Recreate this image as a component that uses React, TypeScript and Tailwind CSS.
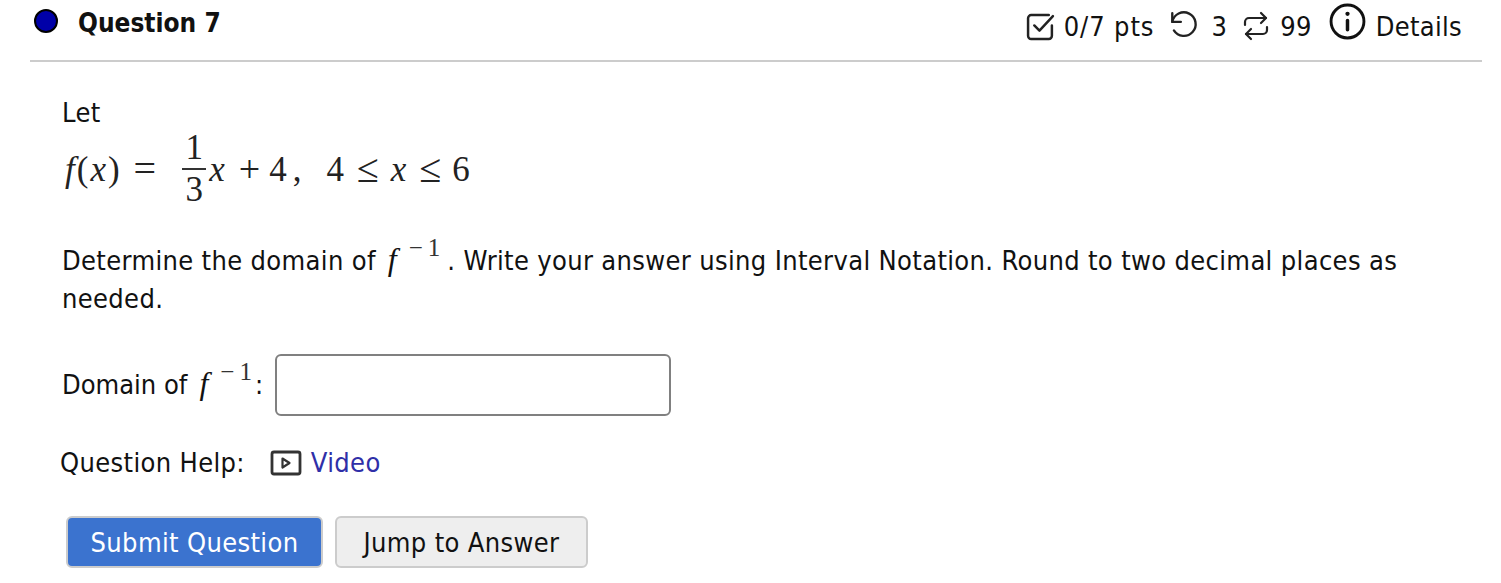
const mathFont = "font-['Liberation_Serif',serif]";

function Finverse({ className = "" }: { className?: string }) {
  return (
    <span className={`${mathFont} inline-flex items-baseline ml-[12px] tracking-normal ${className}`}>
      <i className="text-[32px] leading-none">f</i>
      <span className="relative -top-[14px] ml-[12px] text-[25px] leading-none text-[#333]">−&thinsp;1</span>
    </span>
  );
}

function HeaderIcons() {
  return (
    <div className="flex items-center text-[27px] leading-none text-[#111] tracking-[0.3px]">
      <svg width="29" height="29" viewBox="0 0 28 28" fill="none" stroke="#222" strokeWidth="2.4" strokeLinecap="round" strokeLinejoin="round">
        <path d="M25 13v10a3 3 0 0 1-3 3H5a3 3 0 0 1-3-3V6a3 3 0 0 1 3-3h17" />
        <path d="M8 13l5 5 13-14" />
      </svg>
      <span className="ml-[9px] tracking-[0.9px]">0/7 pts</span>
      <svg className="ml-[14px] -mt-[4px]" width="30" height="30" viewBox="0 0 28 28" fill="none" stroke="#222" strokeWidth="2.2" strokeLinecap="round" strokeLinejoin="round">
        <path d="M4 4v8h8" />
        <path d="M4 12a11 11 0 1 1 1.5 8" />
      </svg>
      <span className="ml-[13px]">3</span>
      <svg className="ml-[15px]" width="28" height="30" viewBox="0 0 28 30" fill="none" stroke="#222" strokeWidth="2.2" strokeLinecap="round" strokeLinejoin="round">
        <path d="M19 2l5 5-5 5" />
        <path d="M3 14v-3a4 4 0 0 1 4-4h17" />
        <path d="M9 28l-5-5 5-5" />
        <path d="M25 16v3a4 4 0 0 1-4 4H4" />
      </svg>
      <span className="ml-[10px]">99</span>
      <svg className="ml-[17px] -mt-[9px]" width="37" height="37" viewBox="0 0 36 36" fill="none" stroke="#111" strokeWidth="2.8" strokeLinecap="round">
        <circle cx="18" cy="18" r="16" />
        <path d="M18 17v9" strokeWidth="3.4" />
        <circle cx="18" cy="10.5" r="2.1" fill="#111" stroke="none" />
      </svg>
      <span className="ml-[10px]">Details</span>
    </div>
  );
}

export default function App() {
  return (
    <div className="w-[1501px] h-[583px] overflow-hidden bg-white pl-[30px] pr-[19px] text-[27px] leading-[38px] tracking-[0.35px] text-[#111] font-['DejaVu_Sans_Condensed','Noto_Sans',sans-serif]">
      <header className="flex items-start justify-between h-[62px] border-b-2 border-[#ccc] pr-[20px]">
        <div className="flex items-center mt-[4px]">
          <span className="block w-[24px] h-[24px] rounded-full bg-[#0000a8] border-2 border-black ml-[4px] -mt-[5px]" />
          <h2 className="ml-[20px] text-[26px] leading-[38px] font-bold tracking-normal">Question 7</h2>
        </div>
        <div className="mt-[11px]">
          <HeaderIcons />
        </div>
      </header>

      <main className="pl-[32px]">
        <p className="mt-[32px]">Let</p>
        <div className={`${mathFont} flex items-center h-[80px] -mt-[3px] text-[35px] leading-none tracking-normal text-[#222]`}>
          <span className="ml-[3px] tracking-[2px]"><i>f</i>(<i>x</i>)</span>
          <span className="ml-[12px] text-[40px]">=</span>
          <span className="inline-flex flex-col items-center ml-[26px] w-[24px]">
            <span className="leading-[40px] border-b-2 border-[#333] w-full text-center">1</span>
            <span className="leading-[40px]">3</span>
          </span>
          <i className="ml-[3px]">x</i>
          <span className="ml-[14px] text-[38px]">+</span>
          <span className="ml-[9px]">4</span>
          <span className="ml-[6px]">,</span>
          <span className="ml-[25px]">4</span>
          <span className="ml-[13px] text-[40px]">≤</span>
          <i className="ml-[12px]">x</i>
          <span className="ml-[13px] text-[40px]">≤</span>
          <span className="ml-[11px]">6</span>
        </div>

        <p className="mt-[33px] w-[1380px]">
          Determine the domain of<Finverse className="mr-[7px]" />. Write your answer using Interval Notation. Round to two decimal places as needed.
        </p>

        <div className="flex items-center mt-[36px]">
          <span className="tracking-normal">Domain of<Finverse className="mr-[3px]" />:</span>
          <input
            type="text"
            aria-label="Domain of f inverse"
            className="ml-[12px] w-[396px] h-[62px] rounded-[6px] border-2 border-[#808080] bg-white"
          />
        </div>

        <div className="flex items-center mt-[28px] -ml-[2px]">
          <span>Question Help:</span>
          <svg className="ml-[25px]" width="32" height="26" viewBox="0 0 32 26" fill="none" stroke="#333" strokeWidth="2.8" strokeLinejoin="round">
            <rect x="2" y="2" width="28" height="22" rx="2" />
            <path d="M12.5 8.5l7 4.5-7 4.5z" strokeWidth="2.2" />
          </svg>
          <a href="#" className="ml-[9px] text-[#2f2fa8]">Video</a>
        </div>

        <div className="flex items-center gap-[12px] mt-[34px] ml-[4px]">
          <button type="button" className="w-[257px] h-[52px] pt-[2px] rounded-[6px] border-2 border-[#ccc] bg-[#3b73cf] text-white">
            Submit Question
          </button>
          <button type="button" className="w-[253px] h-[52px] pt-[2px] rounded-[6px] border-2 border-[#ccc] bg-[#eee] text-[#111]">
            Jump to Answer
          </button>
        </div>
      </main>
    </div>
  );
}
